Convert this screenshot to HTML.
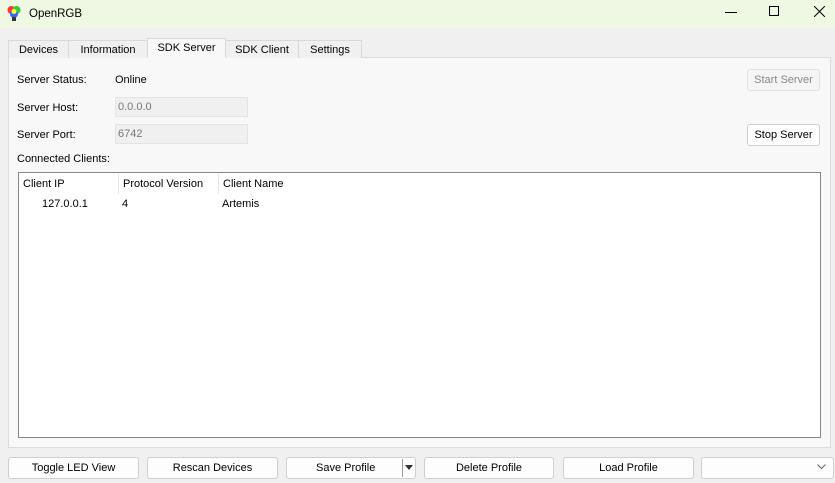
<!DOCTYPE html>
<html><head><style>
*{box-sizing:border-box;margin:0;padding:0}
body{width:835px;height:483px;background:#f0f0f0;font-family:"Liberation Sans",sans-serif;font-size:11px;color:#000;position:relative;overflow:hidden}
.a{position:absolute}
.title{left:0;top:0;width:835px;height:28px;background:#eef8e2}
.tab{position:absolute;top:40px;height:18px;border:1px solid #d9d9d9;border-bottom:none;background:#f0f0f0;text-align:center;line-height:18px}
.panel{left:8px;top:57px;width:823px;height:391px;background:#f8f8f8;border:1px solid #dcdcdc}
.lbl{position:absolute;left:17px}
.inp{position:absolute;left:115px;width:133px;height:20px;background:#f0f0f0;border:1px solid #e3e3e3;color:#777;padding-left:2px;line-height:19px}
.btn{position:absolute;height:22px;background:#fdfdfd;border:1px solid #cfcfcf;border-radius:3px;text-align:center;line-height:21px}
</style></head><body>
<div class="a title"></div>
<svg class="a" style="left:7px;top:5px" width="14" height="18" viewBox="0 0 14 18"><circle cx="4.5" cy="5" r="4" fill="#f33"/><circle cx="9.5" cy="5" r="4" fill="#3c3"/><circle cx="7" cy="9" r="4" fill="#36f"/><circle cx="7" cy="6.5" r="2.5" fill="#ff3"/><rect x="5" y="12" width="4" height="4" fill="#333"/></svg>
<div class="a" style="left:29px;top:8px;font-size:11.5px">OpenRGB</div>
<div class="a" style="left:725px;top:12px;width:12px;height:1px;background:#000"></div>
<div class="a" style="left:769px;top:6px;width:10px;height:10px;border:1px solid #000"></div>
<svg class="a" style="left:814px;top:6px" width="11" height="11"><path d="M0 0L11 11M11 0L0 11" stroke="#000" stroke-width="1"/></svg>
<div class="a panel"></div>
<div class="tab" style="left:8px;width:61px">Devices</div>
<div class="tab" style="left:68px;width:80px">Information</div>
<div class="tab" style="left:147px;width:79px;top:38px;height:20px;background:#f8f8f8;line-height:19px">SDK Server</div>
<div class="tab" style="left:225px;width:74px">SDK Client</div>
<div class="tab" style="left:298px;width:64px">Settings</div>
<div class="lbl" style="top:74px">Server Status:</div>
<div class="a" style="left:115px;top:74px">Online</div>
<div class="lbl" style="top:102px">Server Host:</div>
<div class="inp" style="top:97px">0.0.0.0</div>
<div class="lbl" style="top:129px">Server Port:</div>
<div class="inp" style="top:124px">6742</div>
<div class="lbl" style="top:153px">Connected Clients:</div>
<div class="btn" style="left:747px;top:69px;width:73px;background:#f5f5f5;border-color:#e0e0e0;color:#888">Start Server</div>
<div class="btn" style="left:747px;top:124px;width:73px">Stop Server</div>
<div class="a" style="left:18px;top:172px;width:803px;height:266px;background:#fff;border:1px solid #828790"></div>
<div class="a" style="left:23px;top:178px">Client IP</div>
<div class="a" style="left:118px;top:174px;width:1px;height:20px;background:#e5e5e5"></div>
<div class="a" style="left:123px;top:178px">Protocol Version</div>
<div class="a" style="left:218px;top:174px;width:1px;height:20px;background:#e5e5e5"></div>
<div class="a" style="left:223px;top:178px">Client Name</div>
<div class="a" style="left:42px;top:198px">127.0.0.1</div>
<div class="a" style="left:122px;top:198px">4</div>
<div class="a" style="left:222px;top:198px">Artemis</div>
<div class="btn" style="left:8px;top:457px;width:131px">Toggle LED View</div>
<div class="btn" style="left:147px;top:457px;width:131px">Rescan Devices</div>
<div class="btn" style="left:286px;top:457px;width:130px;text-align:left;padding-left:29px">Save Profile</div>
<div class="a" style="left:402px;top:459px;width:1px;height:18px;background:#999"></div>
<div class="a" style="left:405px;top:465px;border-left:4px solid transparent;border-right:4px solid transparent;border-top:5px solid #333"></div>
<div class="btn" style="left:424px;top:457px;width:130px">Delete Profile</div>
<div class="btn" style="left:563px;top:457px;width:131px">Load Profile</div>
<div class="btn" style="left:701px;top:457px;width:133px"></div>
<svg class="a" style="left:817px;top:464px" width="9" height="6"><path d="M0.5 0.5L4.5 4.5L8.5 0.5" stroke="#666" fill="none"/></svg>
</body></html>
